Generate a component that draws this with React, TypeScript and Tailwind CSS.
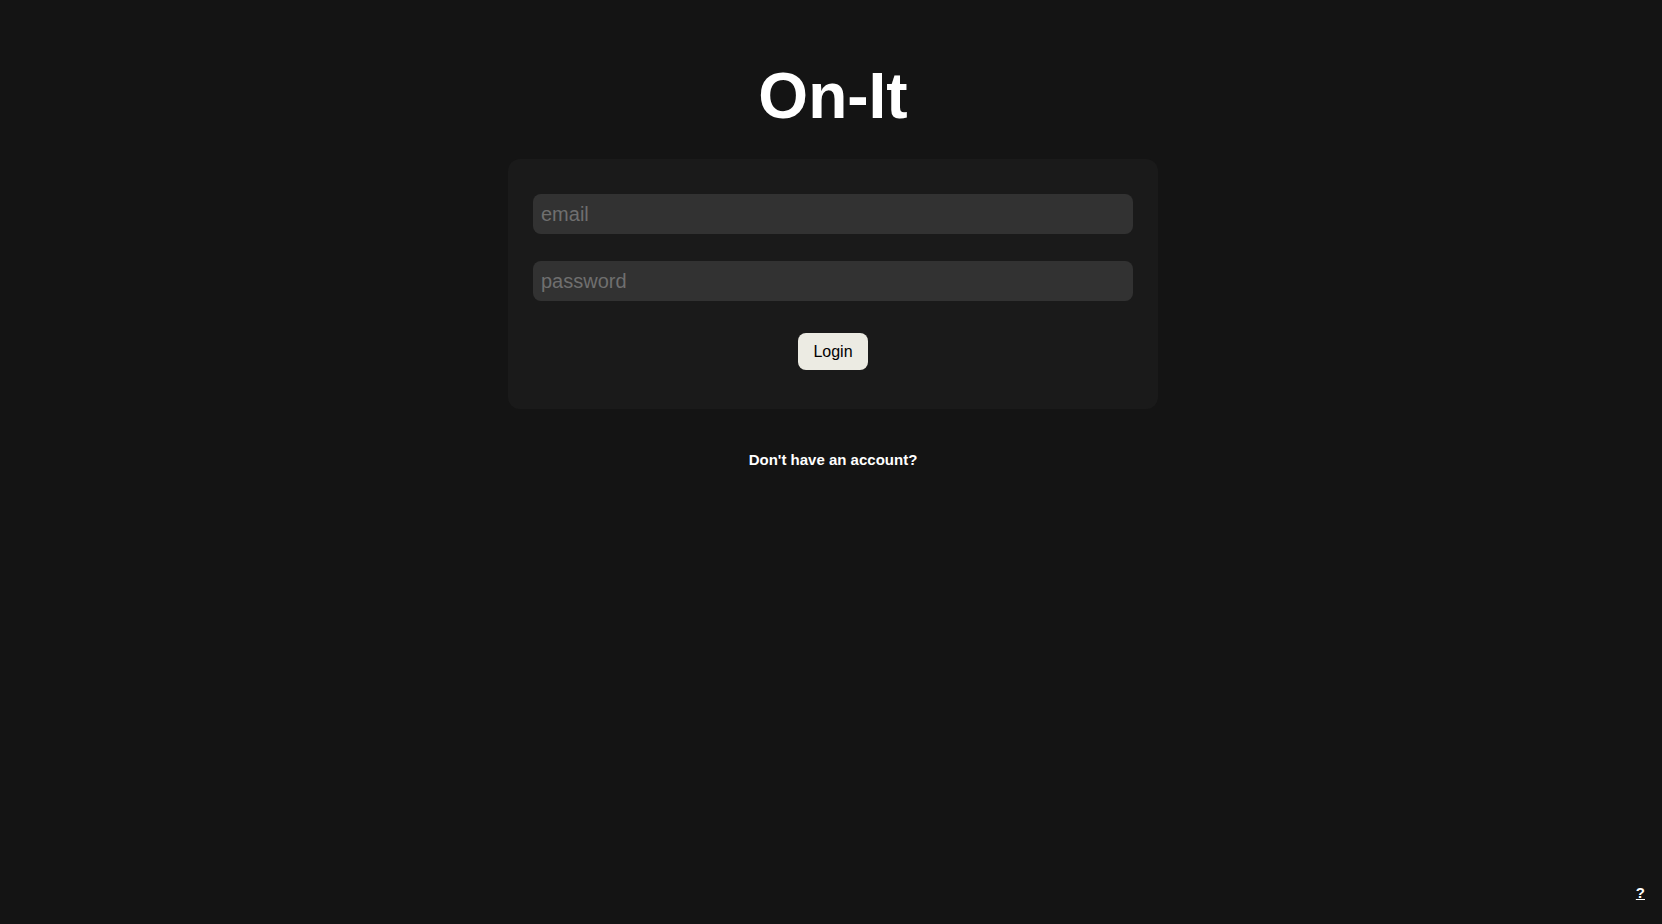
import { useState } from 'react';

export default function App() {
  const [email, setEmail] = useState('');
  const [password, setPassword] = useState('');

  return (
    <div
      className="relative min-h-[924px] w-full bg-[#141414] text-white flex flex-col items-center pt-[64px] pl-[4px]"
      style={{ fontFamily: '"Liberation Sans", Arial, sans-serif' }}
    >
      <h1 className="text-[64px] font-bold leading-none">On-It</h1>

      {/* Login card */}
      <form
        className="mt-[31px] w-[650px] rounded-xl bg-[#1a1a1a] px-[25px] pt-[35px] pb-[39px] flex flex-col items-center"
        onSubmit={(e) => e.preventDefault()}
      >
        <input
          type="email"
          placeholder="email"
          value={email}
          onChange={(e) => setEmail(e.target.value)}
          className="w-full h-[40px] rounded-lg bg-[#323232] px-2 text-[20px] text-white placeholder:text-[#6f6f6f] outline-none"
        />
        <input
          type="password"
          placeholder="password"
          value={password}
          onChange={(e) => setPassword(e.target.value)}
          className="mt-[27px] w-full h-[40px] rounded-lg bg-[#323232] px-2 text-[20px] text-white placeholder:text-[#6f6f6f] outline-none"
        />
        <button
          type="submit"
          className="mt-[32px] h-[37px] px-[15px] rounded-lg bg-[#ecebe3] text-black text-[16px]"
        >
          Login
        </button>
      </form>

      <a className="mt-[40px] text-[15px] font-bold text-white cursor-pointer">Don't have an account?</a>

      <a className="absolute right-[17px] bottom-[20px] text-[15px] font-bold underline text-white cursor-pointer">?</a>
    </div>
  );
}
